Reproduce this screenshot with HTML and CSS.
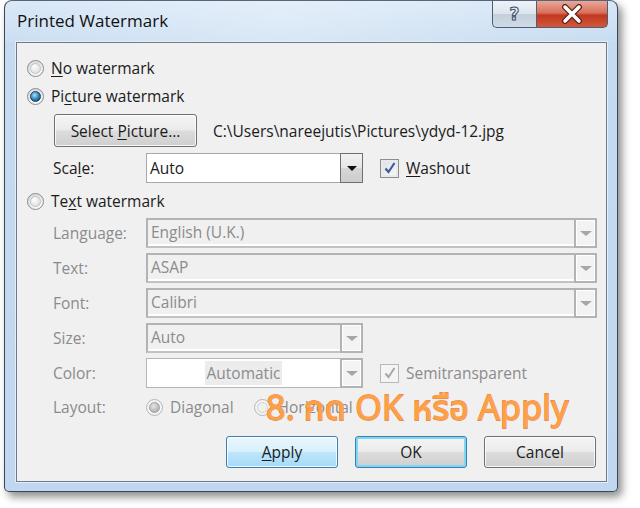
FILE: index.html
```html
<!DOCTYPE html>
<html>
<head>
<meta charset="utf-8">
<link rel="stylesheet" href="styles.css">
</head>
<body>
<div class="window">
  <div class="titlebar">
    <span class="title">Printed Watermark</span>
    <div class="caption">
      <span class="cbtn help">?</span>
      <span class="cbtn close">
        <svg width="26" height="20" viewBox="0 0 26 20"><path d="M6 3 L20 17 M20 3 L6 17" stroke="#5a2418" stroke-width="6" stroke-linecap="round"/><path d="M6 3 L20 17 M20 3 L6 17" stroke="#fff" stroke-width="3.5" stroke-linecap="round"/></svg>
      </span>
    </div>
  </div>
  <div class="client">
    <div class="rrow first"><span class="radio"></span><span><u>N</u>o watermark</span></div>
    <div class="rrow gap4"><span class="radio on"></span><span>Pi<u>c</u>ture watermark</span></div>
    <div class="picrow">
      <span class="btn pick"><span>Select <u>P</u>icture...</span></span>
      <span class="path">C:\Users\nareejutis\Pictures\ydyd-12.jpg</span>
    </div>
    <div class="frow gap6">
      <span class="lbl">Sca<u>l</u>e:</span>
      <div class="combo short"><span class="val">Auto</span><span class="drop"><span class="tri"></span></span></div>
      <span class="check"><svg width="14" height="14" viewBox="0 0 14 14"><path d="M2.5 7.5 L5.5 11 L11.5 2" fill="none" stroke="#3e5b9a" stroke-width="2.2"/></svg></span>
      <span class="chklbl"><u>W</u>ashout</span>
    </div>
    <div class="rrow gap6"><span class="radio"></span><span>Te<u>x</u>t watermark</span></div>
    <div class="frow gap5 dis">
      <span class="lbl">Language:</span>
      <div class="combo full off"><span class="val">English (U.K.)</span><span class="drop"><span class="tri"></span></span></div>
    </div>
    <div class="frow gap5 dis">
      <span class="lbl">Text:</span>
      <div class="combo full off"><span class="val">ASAP</span><span class="drop"><span class="tri"></span></span></div>
    </div>
    <div class="frow gap5 dis">
      <span class="lbl">Font:</span>
      <div class="combo full off"><span class="val">Calibri</span><span class="drop"><span class="tri"></span></span></div>
    </div>
    <div class="frow gap5 dis">
      <span class="lbl">Size:</span>
      <div class="combo short off"><span class="val">Auto</span><span class="drop"><span class="tri"></span></span></div>
    </div>
    <div class="frow gap5 dis">
      <span class="lbl">Color:</span>
      <div class="combo short off white"><span class="val center"><span class="hl">Automatic</span></span><span class="drop"><span class="tri"></span></span></div>
      <span class="check off"><svg width="14" height="14" viewBox="0 0 14 14"><path d="M2.5 7.5 L5.5 11 L11.5 2" fill="none" stroke="#a8a8a8" stroke-width="2"/></svg></span>
      <span class="chklbl">Semitransparent</span>
    </div>
    <div class="frow layout dis">
      <span class="lbl">Layout:</span>
      <span class="radio off on"></span><span class="opt">Diagonal</span>
      <span class="radio off second"></span><span class="opt">Horizontal</span>
    </div>
    <div class="btnrow">
      <span class="btn hover"><span><u>A</u>pply</span></span>
      <span class="btn focus">OK</span>
      <span class="btn">Cancel</span>
    </div>
    <div class="note">8. กด OK หรือ Apply</div>
  </div>
</div>
</body>
</html>
```
FILE: styles.css
```css
html, body {
  margin: 0;
  padding: 0;
  background: #ffffff;
}
body {
  width: 640px;
  height: 508px;
  overflow: hidden;
  font-family: "Open Sans", "Noto Sans", "DejaVu Sans", sans-serif;
  font-size: 15.5px;
  color: #1b1b1b;
}
u { text-decoration: underline; text-underline-offset: 2px; text-decoration-thickness: 1px; }

.window {
  margin-left: 4px;
  width: 614px;
  box-sizing: border-box;
  border: 1px solid #3b4756;
  border-top-color: #56657a;
  border-radius: 8px 8px 5px 5px;
  background: linear-gradient(to bottom, #d6e6f6 0px, #c5dbf1 40px, #c0d7ef 100%);
  box-shadow: 4px 5px 9px rgba(0,0,0,0.45);
}
.titlebar {
  height: 41px;
  display: flex;
  justify-content: space-between;
  align-items: flex-start;
  background: linear-gradient(to right, rgba(255,255,255,0.1), rgba(255,255,255,0.35) 45%, rgba(255,255,255,0.05));
  border-radius: 7px 7px 0 0;
}
.title {
  padding: 9px 0 0 12px;
  font-size: 17px;
  line-height: 22px;
  color: #111;
}
.caption {
  display: flex;
  margin-right: 9px;
}
.cbtn {
  height: 27px;
  box-sizing: border-box;
  display: flex;
  align-items: center;
  justify-content: center;
  border: 1px solid #4f5e70;
  border-top: none;
}
.help {
  width: 44px;
  border-radius: 0 0 0 5px;
  border-right: none;
  background: linear-gradient(to bottom, #eef3f8 0%, #dbe5ee 50%, #c3d0dc 51%, #cfdce8 100%);
  font-family: "DejaVu Sans", sans-serif;
  font-weight: bold;
  font-size: 17px;
  color: #e8eef5;
  -webkit-text-stroke: 1px #3d4b5e;
}
.close {
  width: 72px;
  border-radius: 0 0 5px 0;
  background: linear-gradient(to bottom, #e8a898 0%, #d8705c 45%, #c2371f 55%, #d2583c 100%);
}

.client {
  position: relative;
  margin: 0 10px 9px 11px;
  border: 1px solid #6c7a8a;
  box-shadow: 0 0 0 1px #e4eef8;
  background: #f0f0f0;
  padding: 0 9px 13px 0;
  display: flex;
  flex-direction: column;
}

.rrow {
  height: 24px;
  display: flex;
  align-items: center;
  padding-left: 10px;
  gap: 7px;
}
.first { margin-top: 13px; }
.gap4 { margin-top: 4px; }
.gap5 { margin-top: 5px; }
.gap6 { margin-top: 6px; }

.radio {
  position: relative;
  flex: none;
  width: 17px;
  height: 17px;
  box-sizing: border-box;
  border-radius: 50%;
  border: 1px solid #8a8c8e;
  background: radial-gradient(circle at 60% 70%, #ffffff 0%, #f0f0f0 40%, #c9cbcd 100%);
}
.radio::after {
  content: "";
  position: absolute;
  left: 2px; top: 2px;
  width: 11px; height: 11px;
  box-sizing: border-box;
  border-radius: 50%;
  border: 1px solid #c0c2c4;
  background: radial-gradient(circle at 35% 30%, #fdfdfd, #e2e3e4 70%, #d3d5d7);
}
.radio.on::after {
  border-color: #1d3f5e;
  background: radial-gradient(circle at 40% 35%, #a9e0fb 0%, #3d8fc3 45%, #0f4a78 85%, #0b3252 100%);
}
.radio.off { border-color: #b6b6b6; background: #f4f4f4; }
.radio.off::after { border-color: #d0d0d0; background: #f0f0f0; }
.radio.off.on::after { border-color: #a2a2a2; background: radial-gradient(circle at 40% 35%, #e6e6e6, #b4b4b4 70%, #9d9d9d); }

.picrow {
  margin-top: 6px;
  height: 33px;
  display: flex;
  align-items: center;
  padding-left: 37px;
  gap: 16px;
}
.btn {
  box-sizing: border-box;
  display: flex;
  align-items: center;
  justify-content: center;
  border: 1px solid #707070;
  border-radius: 3px;
  background: linear-gradient(to bottom, #f4f4f4 0%, #ebebeb 48%, #dcdcdc 52%, #cfcfcf 100%);
  box-shadow: inset 0 0 0 1px rgba(255,255,255,0.8);
  color: #1b1b1b;
}
.pick { width: 143px; height: 33px; }
.path { color: #1b1b1b; }

.frow {
  height: 30px;
  display: flex;
  align-items: center;
}
.lbl {
  flex: none;
  width: 93px;
  margin-left: 36px;
}
.dis { color: #8b8b8b; }

.combo {
  display: flex;
  box-sizing: border-box;
  height: 30px;
  border: 1px solid #a5a8ad;
  background: #ffffff;
}
.short { width: 217px; }
.full { width: 451px; }
.val {
  flex: 1;
  padding-left: 3px;
  line-height: 28px;
  white-space: nowrap;
}
.val.center { display: flex; justify-content: center; align-items: center; padding-left: 0; }
.hl { background: #ececec; padding: 0 2px; line-height: 24px; }
.drop {
  flex: none;
  width: 23px;
  box-sizing: border-box;
  border: 1px solid #6f6f6f;
  margin: -1px -1px -1px 0;
  background: linear-gradient(to bottom, #f2f2f2 0%, #e6e6e6 50%, #d6d6d6 51%, #cdcdcd 100%);
  display: flex;
  align-items: center;
  justify-content: center;
}
.tri {
  width: 0; height: 0;
  border-left: 5px solid transparent;
  border-right: 5px solid transparent;
  border-top: 5px solid #111;
  margin-top: 1px;
}
.combo.off {
  border: 2px solid #b3b3b3;
  border-bottom-color: #c2c2c2;
  background: #f0f0f0;
  box-shadow: inset 0 -2px 0 #ffffff;
}
.combo.off .val { line-height: 25px; }
.combo.off .drop {
  margin: -2px -2px -2px 0;
  border: 2px solid #b3b3b3;
  background: #f3f3f3;
  box-shadow: inset 0 0 0 1px #ffffff;
}
.combo.off .tri { border-top-color: #a6a6a6; border-left-width: 6px; border-right-width: 6px; }
.combo.off.white { background: #ffffff; border-width: 1px; border-color: #b6b6b6; box-shadow: none; }
.combo.off.white .val { line-height: 28px; }
.combo.off.white .drop { margin: -1px -1px -1px 0; border-width: 2px; }

.check {
  flex: none;
  width: 19px;
  height: 19px;
  box-sizing: border-box;
  margin-left: 17px;
  border: 1px solid #8b8d90;
  background: linear-gradient(135deg, #dcdee2, #fafafa);
  box-shadow: inset 0 0 0 2px #e9eaec;
  display: flex;
  align-items: center;
  justify-content: center;
}
.check.off { border-color: #b8b8b8; background: #f4f4f4; box-shadow: none; }
.chklbl { margin-left: 7px; }

.layout { height: 24px; margin-top: 7px; }
.opt { margin-left: 7px; }
.layout .radio.second { margin-left: 20px; }

.btnrow {
  margin-top: 17px;
  display: flex;
  justify-content: flex-end;
  gap: 17px;
  padding-right: 1px;
}
.btnrow .btn { width: 112px; height: 32px; }
.btn.hover {
  border-color: #3c7fb1;
  background: linear-gradient(to bottom, #eaf6fd 0%, #d9f0fc 48%, #bee6fd 52%, #a7d9f5 100%);
}
.btn.focus {
  border-color: #3c7fb1;
  box-shadow: inset 0 0 0 2px #7ed6f7;
}

.note {
  position: absolute;
  left: 249px;
  top: 342px;
  font-family: "Open Sans", "Noto Sans Thai", "Noto Sans", sans-serif;
  font-size: 34px;
  line-height: 44px;
  letter-spacing: 0.3px;
  white-space: nowrap;
  color: #ffa040;
  -webkit-text-stroke: 1.4px #e4600c;
  paint-order: stroke fill;
  text-shadow: 0 0 2px #ffd8b0;
}
```
